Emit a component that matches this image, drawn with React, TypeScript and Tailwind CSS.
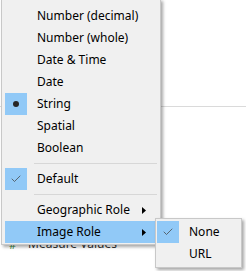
import {Check} from "lucide-react";

type Item =
    | {kind: 'item'; text: string; mark?: 'check' | 'dot'; sub?: boolean; active?: boolean}
    | {kind: 'sep'};

const mainItems: Item[] = [
    {kind: 'item', text: 'Number (decimal)'},
    {kind: 'item', text: 'Number (whole)'},
    {kind: 'item', text: 'Date & Time'},
    {kind: 'item', text: 'Date'},
    {kind: 'item', text: 'String', mark: 'dot'},
    {kind: 'item', text: 'Spatial'},
    {kind: 'item', text: 'Boolean'},
    {kind: 'sep'},
    {kind: 'item', text: 'Default', mark: 'check'},
    {kind: 'sep'},
    {kind: 'item', text: 'Geographic Role', sub: true},
    {kind: 'item', text: 'Image Role', sub: true, active: true},
];

const Mark = ({mark}: {mark?: 'check' | 'dot'}) => (
    <div className={`w-[22px] h-[22px] shrink-0 flex items-center justify-center ${mark ? 'bg-[#91c9f7]' : ''}`}>
        {mark === 'dot' && <div className="w-[6px] h-[6px] rounded-full bg-[#262626]"/>}
        {mark === 'check' && <Check size={12} strokeWidth={1.5} className="text-[#444]"/>}
    </div>
);

const Row = ({item}: {item: Extract<Item, {kind: 'item'}>}) => (
    <div className={`h-[22px] flex items-center ${item.active ? 'bg-[#91c9f7]' : ''}`}>
        <Mark mark={item.mark}/>
        <span className="ml-[10px] flex-1 text-black">{item.text}</span>
        {item.sub && (
            <svg width="4" height="7" viewBox="0 0 4 7" className="mr-[12px]">
                <path d="M0 0 L4 3.5 L0 7 Z" fill="#000"/>
            </svg>
        )}
    </div>
);

export default function App() {
    return (
        <div className="relative w-[246px] h-[271px] bg-white overflow-hidden text-[12px] leading-none"
             style={{fontFamily: '"Noto Sans", "Open Sans", sans-serif'}}>
            {/* page behind the menus */}
            <div className="absolute left-0 right-0 top-[106px] h-px bg-[#dadada]"/>
            <div className="absolute left-[9px] top-[238px] flex items-center gap-[12px] text-[#333]">
                <span className="text-[#3f8a4c] text-[11px]">#</span>
                <span>Measure Values</span>
            </div>

            {/* main menu */}
            <div className="absolute left-[1px] top-[-1px] w-[160px] bg-[#f0f0f0] border border-[#c8c8c8] pt-[5px] pb-[1px] pl-[3px] pr-[2px] shadow-[2px_2px_3px_rgba(0,0,0,0.35)]">
                {mainItems.map((it, i) =>
                    it.kind === 'sep'
                        ? <div key={i} className="h-[9px] flex items-center pl-[29px] pr-[1px]">
                            <div className="h-px w-full bg-[#d7d7d7]"/>
                        </div>
                        : <Row key={i} item={it}/>
                )}
            </div>

            {/* image role submenu */}
            <div className="absolute left-[155px] top-[218px] w-[87px] bg-[#f0f0f0] border border-[#c8c8c8] py-[2px] pl-[1px] pr-[1px] shadow-[2px_2px_3px_rgba(0,0,0,0.35)]">
                <Row item={{kind: 'item', text: 'None', mark: 'check'}}/>
                <Row item={{kind: 'item', text: 'URL'}}/>
            </div>
        </div>
    );
}
